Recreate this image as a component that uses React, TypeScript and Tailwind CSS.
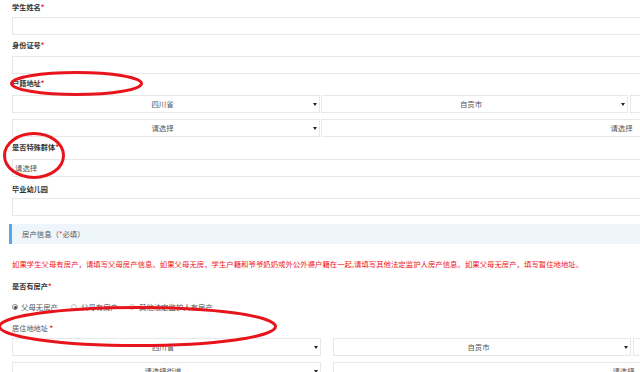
import React from "react";

function Star({ space = false }: { space?: boolean }) {
  return (
    <span className="text-[#e8101a] relative -top-[1px] text-[7px] font-bold">
      {space ? "\u00a0*" : "*"}
    </span>
  );
}

function Label({ text, className = "", normal = false }: { text: string; className?: string; normal?: boolean }) {
  return (
    <div
      className={`h-[10px] flex items-center text-[7.2px] leading-none ${
        normal ? "text-[#555] font-normal" : "text-[#333] font-bold"
      } ${className}`}
    >
      <span>{text}</span>
      <Star space={normal} />
    </div>
  );
}

function Arrow() {
  return (
    <svg width="4" height="3" viewBox="0 0 4 3" className="shrink-0 ml-[1px] mr-[2px]">
      <polygon points="0,0 4,0 2,3" fill="#222" />
    </svg>
  );
}

function Sel({ text, className = "", arrow = true }: { text: string; className?: string; arrow?: boolean }) {
  return (
    <div className={`h-[18px] shrink-0 border border-[#e8e8e8] bg-white flex items-center ${className}`}>
      <span className="flex-1 text-center text-[7.4px] text-[#555] leading-none">{text}</span>
      {arrow ? <Arrow /> : <span className="w-[7px] shrink-0" />}
    </div>
  );
}

function Input({ className = "" }: { className?: string }) {
  return <div className={`h-[18px] w-[700px] shrink-0 border border-[#e8e8e8] bg-white ${className}`} />;
}

function Radio({ checked }: { checked?: boolean }) {
  return (
    <span
      className={`w-[6px] h-[6px] rounded-full border shrink-0 flex items-center justify-center ${
        checked ? "border-[#888]" : "border-[#c4c4c4]"
      }`}
    >
      {checked ? <span className="w-[3px] h-[3px] rounded-full bg-[#444]" /> : null}
    </span>
  );
}

export default function App() {
  return (
    <div className="w-[640px] h-[372px] overflow-hidden bg-white relative font-['Noto_Sans_CJK_SC','Noto_Sans',sans-serif]">
      <div className="flex flex-col pl-[12px] w-[1400px]">
        <Label text="学生姓名" className="mt-[3px]" />
        <Input className="mt-[4px]" />
        <Label text="身份证号" className="mt-[6px]" />
        <Input className="mt-[5px]" />
        <Label text="户籍地址" className="mt-[5px]" />
        <div className="flex mt-[6px]">
          <Sel text="四川省" className="w-[308px]" />
          <Sel text="自贡市" className="w-[307px] ml-[1px]" />
          <Sel text="" arrow={false} className="w-[300px] ml-[2px]" />
        </div>
        <div className="flex mt-[6px]">
          <Sel text="请选择" className="w-[308px]" />
          <Sel text="请选择" className="w-[608px] ml-[1px]" />
        </div>
        <Label text="是否特殊群体" className="mt-[6px]" />
        <div className="mt-[6px] h-[18px] w-[700px] border border-[#e8e8e8] bg-white flex items-center pl-[2px]">
          <span className="text-[7.4px] text-[#555] leading-none">请选择</span>
        </div>
        <div className="h-[10px] flex items-center text-[7.2px] leading-none text-[#333] font-bold mt-[8px]">毕业幼儿园</div>
        <Input className="mt-[3px]" />
        <div className="mt-[8px] -ml-[3px] h-[20px] w-[700px] bg-[#eef6fb] border-l-[3px] border-[#5da6e6] flex items-center pl-[10px] text-[7.4px] leading-none text-[#555]">
          <span>房产信息（</span>
          <span className="text-[#e8101a]">*</span>
          <span>必填）</span>
        </div>
        <div className="mt-[15px] h-[10px] flex items-center text-[7.4px] leading-none text-[#f0141c] whitespace-nowrap">
          如果学生父母有房产，请填写父母房产信息。如果父母无房，学生户籍和爷爷奶奶或外公外婆户籍在一起,请填写其他法定监护人房产信息。如果父母无房产，填写暂住地地址。
        </div>
        <Label text="是否有房产" className="mt-[13px]" />
        <div className="mt-[10px] h-[10px] flex items-center text-[7.4px] leading-none text-[#555]">
          <Radio checked />
          <span className="ml-[3px] mr-[13px]">父母无房产</span>
          <Radio />
          <span className="ml-[4px] mr-[11px]">父母有房产</span>
          <Radio />
          <span className="ml-[4px]">其他法定监护人有房产</span>
        </div>
        <Label text="居住地地址" normal className="mt-[12px]" />
        <div className="flex mt-[4px]">
          <Sel text="四川省" className="w-[309px]" />
          <Sel text="自贡市" className="w-[298px] ml-[12px]" />
          <Sel text="" arrow={false} className="w-[300px] ml-[2px]" />
        </div>
        <div className="flex mt-[6px]">
          <Sel text="请选择街道" className="w-[309px]" />
          <Sel text="请选择" className="w-[588px] ml-[12px]" />
        </div>
      </div>
      <svg className="absolute left-0 top-0 pointer-events-none" width="640" height="372" viewBox="0 0 640 372">
        <ellipse cx="76.5" cy="83.5" rx="65" ry="11" fill="none" stroke="#e8141b" strokeWidth="3" />
        <ellipse cx="34" cy="155.5" rx="29.5" ry="22" fill="none" stroke="#e8141b" strokeWidth="3" />
        <ellipse cx="137.5" cy="326.5" rx="138" ry="19" fill="none" stroke="#e8141b" strokeWidth="3" />
      </svg>
    </div>
  );
}
